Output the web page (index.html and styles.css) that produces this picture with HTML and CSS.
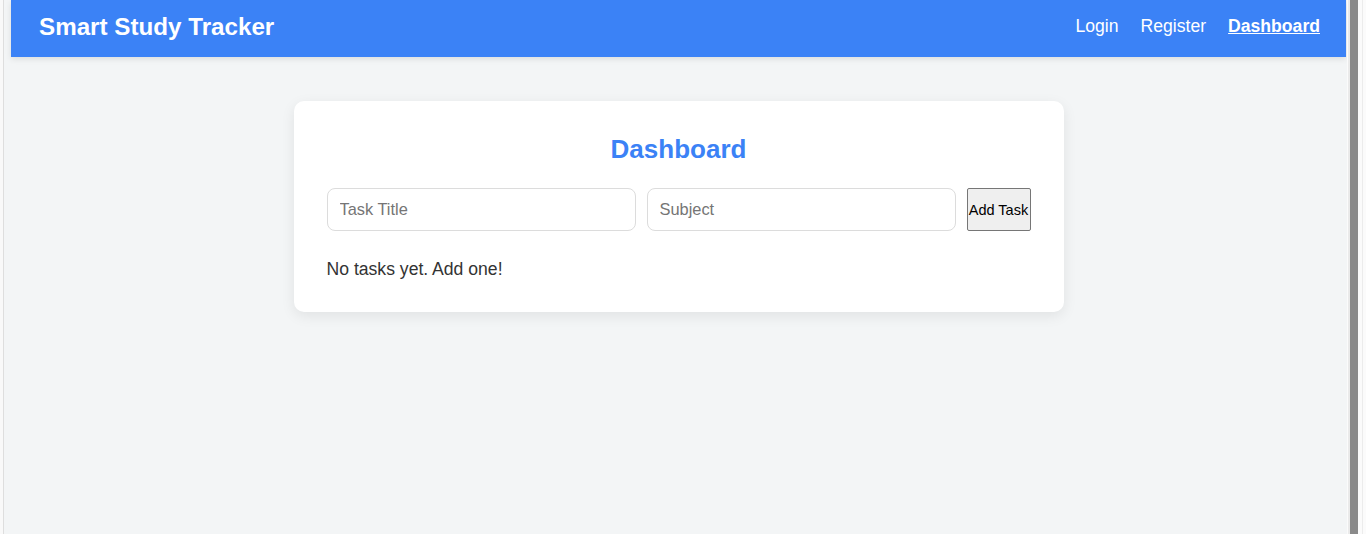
FILE: index.html
```html
<!DOCTYPE html>
<html lang="en">
<head>
<meta charset="utf-8">
<title>Smart Study Tracker</title>
<link rel="stylesheet" href="styles.css">
</head>
<body>
<div class="frame-left"></div>
<div class="page">
  <nav class="navbar">
    <div class="brand">Smart Study Tracker</div>
    <div class="links">
      <a href="#" class="link">Login</a>
      <a href="#" class="link">Register</a>
      <a href="#" class="link active">Dashboard</a>
    </div>
  </nav>
  <main class="main">
    <section class="card">
      <h2 class="title">Dashboard</h2>
      <form class="task-form">
        <input class="field" type="text" placeholder="Task Title">
        <input class="field" type="text" placeholder="Subject">
        <button class="add-btn" type="button">Add Task</button>
      </form>
      <p class="empty">No tasks yet. Add one!</p>
    </section>
  </main>
</div>
<div class="frame-right">
  <div class="scroll-bar"></div>
  <div class="scroll-rest"></div>
</div>
</body>
</html>
```
FILE: styles.css
```css
html, body {
  margin: 0;
  height: 534px;
  overflow: hidden;
}
body {
  display: flex;
  font-family: "Liberation Sans", Arial, sans-serif;
  background: #fbfbfb;
}
.frame-left {
  width: 3px;
  background: #f9f9f9;
  border-right: 1px solid #dedede;
}
.page {
  flex: 1;
  background: #f3f5f6;
  padding: 0 1px 0 7px;
}
.navbar {
  height: 57px;
  box-sizing: border-box;
  background: #3b82f6;
  display: flex;
  align-items: center;
  justify-content: space-between;
  padding: 0 26px 4px 28px;
  box-shadow: 0 2px 6px rgba(0, 0, 0, 0.1);
}
.brand {
  color: #fff;
  font-size: 24.2px;
  font-weight: bold;
}
.links {
  display: flex;
  gap: 22px;
  padding-bottom: 1px;
}
.link {
  color: #fff;
  font-size: 17.6px;
  text-decoration: none;
}
.link.active {
  font-weight: bold;
  text-decoration: underline;
}
.main {
  padding-top: 44px;
}
.card {
  width: 770px;
  box-sizing: border-box;
  margin: 0 auto;
  background: #fff;
  border-radius: 10px;
  padding: 33px 33px 32px;
  box-shadow: 0 4px 14px rgba(0, 0, 0, 0.08);
}
.title {
  margin: 0 0 23px;
  text-align: center;
  color: #3b82f6;
  font-size: 26px;
  font-weight: bold;
}
.task-form {
  display: flex;
  gap: 11px;
  margin: 0 0 28px;
}
.field {
  flex: 1;
  min-width: 0;
  height: 43px;
  box-sizing: border-box;
  border: 1px solid #dcdcdc;
  border-radius: 8px;
  padding: 0 12px;
  font-family: "Liberation Sans", Arial, sans-serif;
  font-size: 16.4px;
  color: #333;
  background: #fff;
}
.field::placeholder {
  color: #757575;
}
.add-btn {
  width: 64px;
  height: 43px;
  box-sizing: border-box;
  padding: 0 1px;
  background: #efefef;
  border: 1px solid #767676;
  border-radius: 2px;
  font-family: "Liberation Sans", Arial, sans-serif;
  font-size: 14.5px;
  color: #000;
  white-space: nowrap;
}
.empty {
  margin: 0;
  font-size: 17.6px;
  color: #333;
}
.frame-right {
  width: 19px;
  display: flex;
  background: #fbfbfb;
}
.scroll-bar {
  width: 8px;
  margin-left: 3px;
  background: #8a8a8a;
  box-shadow: -2px 0 0 #eaeaea;
}
.scroll-rest {
  flex: 1;
  border-right: 1px solid #ececec;
  margin-right: 3px;
}
```
